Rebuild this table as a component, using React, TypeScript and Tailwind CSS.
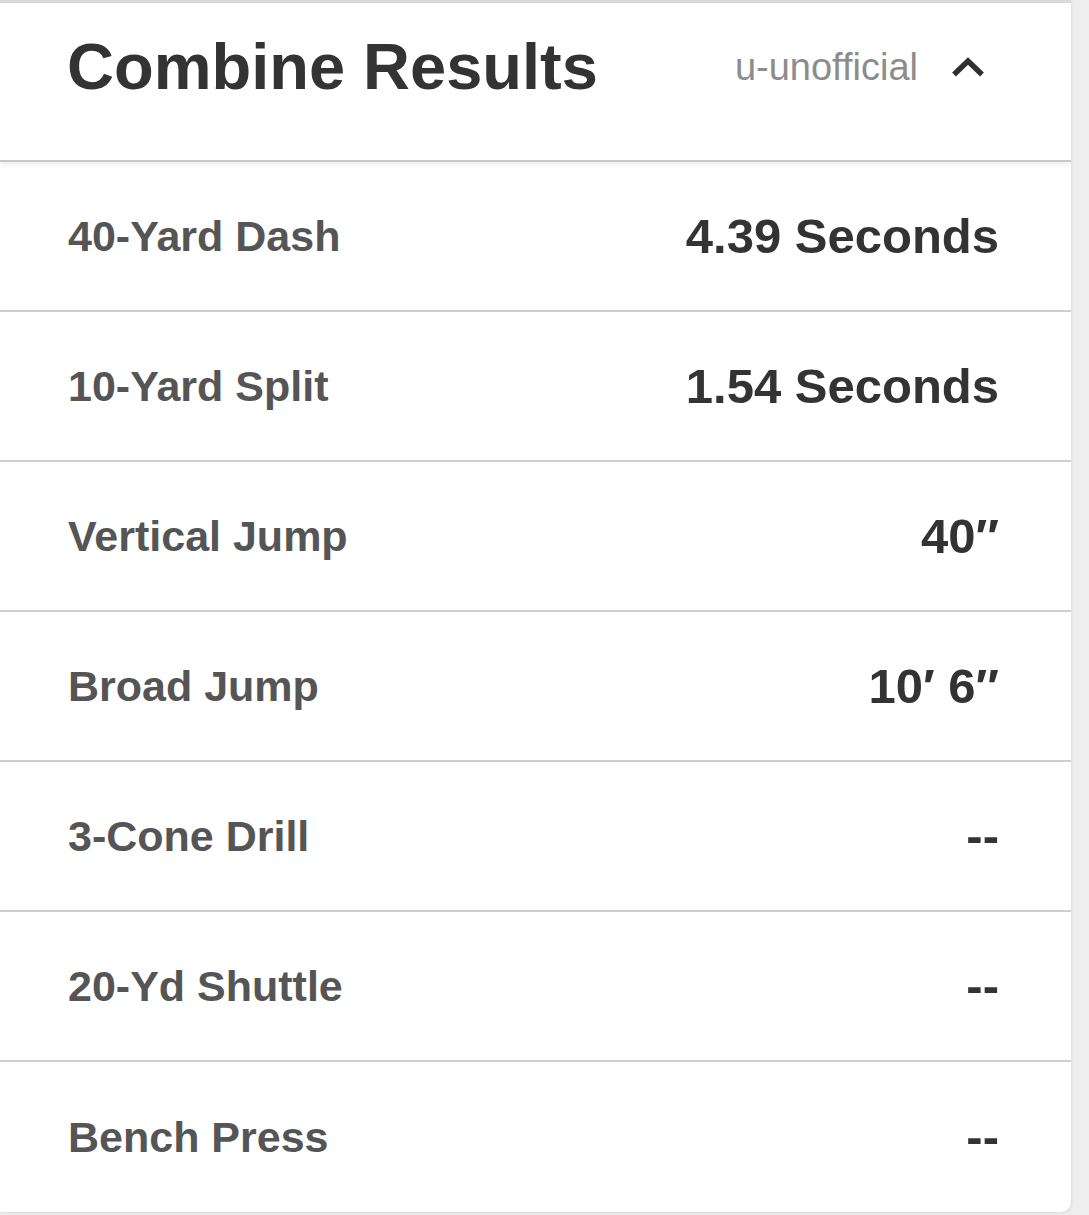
import React from 'react';

interface Result {
  label: string;
  value: string;
}

const results: Result[] = [
  { label: '40-Yard Dash', value: '4.39 Seconds' },
  { label: '10-Yard Split', value: '1.54 Seconds' },
  { label: 'Vertical Jump', value: '40\u2033' },
  { label: 'Broad Jump', value: '10\u2032 6\u2033' },
  { label: '3-Cone Drill', value: '--' },
  { label: '20-Yd Shuttle', value: '--' },
  { label: 'Bench Press', value: '--' },
];

const ChevronUp: React.FC = () => (
  <svg width="34" height="22" viewBox="0 0 34 22" fill="none" className="shrink-0">
    <polyline points="3,18.5 17,5 31,18.5" stroke="#2f2f2f" strokeWidth="5.4" strokeLinejoin="miter" />
  </svg>
);

const ResultRow: React.FC<{ item: Result }> = ({ item }) => (
  <div className="flex items-center justify-between h-[150px] border-b-2 border-[#cfcfcf] last:border-b-0 pl-[68px] pr-[72px]">
    <span className="text-[43px] font-bold text-[#555555] leading-none">{item.label}</span>
    <span className="text-[49px] font-bold text-[#333333] leading-none">{item.value}</span>
  </div>
);

export default function App() {
  return (
    <div className="min-h-screen bg-[#eeeeee]" style={{ fontFamily: '"Liberation Sans", Arial, sans-serif' }}>
      <div className="w-[1071px] bg-white rounded-br-[10px] border-t-[3px] border-[#dadada] shadow-[1px_1px_3px_rgba(0,0,0,0.08)] overflow-hidden">
        {/* Header */}
        <div className="relative z-10 h-[159px] flex items-start justify-between pl-[67px] pr-[86px] pt-[31px] border-b-2 border-[#c9c9c9] shadow-[0_3px_5px_rgba(0,0,0,0.07)]">
          <h2 className="text-[65px] font-bold text-[#333333] leading-none">Combine Results</h2>
          <div className="flex items-center gap-[33px] h-[65px]">
            <span className="text-[38px] text-[#8c8c8c] leading-none">u-unofficial</span>
            <ChevronUp />
          </div>
        </div>

        {/* Rows */}
        <div>
          {results.map(r => (
            <ResultRow key={r.label} item={r} />
          ))}
        </div>
      </div>
    </div>
  );
}
